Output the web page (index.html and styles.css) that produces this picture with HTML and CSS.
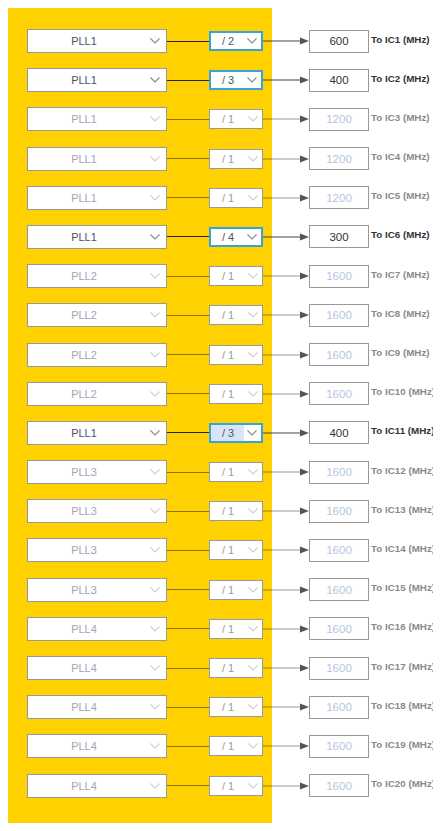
FILE: index.html
```html
<!DOCTYPE html>
<html lang="en">
<head>
    <meta charset="UTF-8">
    <meta name="viewport" content="width=device-width, initial-scale=1.0">
    <title>IC Clock Dividers</title>
    <link rel="stylesheet" href="styles.css">
</head>
<body>
    <div class="panel">
        <div class="row on">
            <div class="src"><span class="txt">PLL1</span><svg class="chev" viewBox="0 0 10 6"><polyline points="0.5,0.5 5,5 9.5,0.5"/></svg></div>
            <span class="link"></span>
            <div class="div sel"><span class="txt">/ 2</span><svg class="chev" viewBox="0 0 10 6"><polyline points="0.5,0.5 5,5 9.5,0.5"/></svg></div>
            <svg class="arrow" viewBox="0 0 46 10"><line x1="0" y1="5" x2="38" y2="5"/><polygon points="37,1.5 46,5 37,8.5"/></svg>
            <div class="out">600</div>
            <span class="label">To IC1 (MHz)</span>
        </div>
        <div class="row on">
            <div class="src"><span class="txt">PLL1</span><svg class="chev" viewBox="0 0 10 6"><polyline points="0.5,0.5 5,5 9.5,0.5"/></svg></div>
            <span class="link"></span>
            <div class="div sel"><span class="txt">/ 3</span><svg class="chev" viewBox="0 0 10 6"><polyline points="0.5,0.5 5,5 9.5,0.5"/></svg></div>
            <svg class="arrow" viewBox="0 0 46 10"><line x1="0" y1="5" x2="38" y2="5"/><polygon points="37,1.5 46,5 37,8.5"/></svg>
            <div class="out">400</div>
            <span class="label">To IC2 (MHz)</span>
        </div>
        <div class="row">
            <div class="src"><span class="txt">PLL1</span><svg class="chev" viewBox="0 0 10 6"><polyline points="0.5,0.5 5,5 9.5,0.5"/></svg></div>
            <span class="link"></span>
            <div class="div"><span class="txt">/ 1</span><svg class="chev" viewBox="0 0 10 6"><polyline points="0.5,0.5 5,5 9.5,0.5"/></svg></div>
            <svg class="arrow" viewBox="0 0 46 10"><line x1="0" y1="5" x2="38" y2="5"/><polygon points="37,1.5 46,5 37,8.5"/></svg>
            <div class="out">1200</div>
            <span class="label">To IC3 (MHz)</span>
        </div>
        <div class="row">
            <div class="src"><span class="txt">PLL1</span><svg class="chev" viewBox="0 0 10 6"><polyline points="0.5,0.5 5,5 9.5,0.5"/></svg></div>
            <span class="link"></span>
            <div class="div"><span class="txt">/ 1</span><svg class="chev" viewBox="0 0 10 6"><polyline points="0.5,0.5 5,5 9.5,0.5"/></svg></div>
            <svg class="arrow" viewBox="0 0 46 10"><line x1="0" y1="5" x2="38" y2="5"/><polygon points="37,1.5 46,5 37,8.5"/></svg>
            <div class="out">1200</div>
            <span class="label">To IC4 (MHz)</span>
        </div>
        <div class="row">
            <div class="src"><span class="txt">PLL1</span><svg class="chev" viewBox="0 0 10 6"><polyline points="0.5,0.5 5,5 9.5,0.5"/></svg></div>
            <span class="link"></span>
            <div class="div"><span class="txt">/ 1</span><svg class="chev" viewBox="0 0 10 6"><polyline points="0.5,0.5 5,5 9.5,0.5"/></svg></div>
            <svg class="arrow" viewBox="0 0 46 10"><line x1="0" y1="5" x2="38" y2="5"/><polygon points="37,1.5 46,5 37,8.5"/></svg>
            <div class="out">1200</div>
            <span class="label">To IC5 (MHz)</span>
        </div>
        <div class="row on">
            <div class="src"><span class="txt">PLL1</span><svg class="chev" viewBox="0 0 10 6"><polyline points="0.5,0.5 5,5 9.5,0.5"/></svg></div>
            <span class="link"></span>
            <div class="div sel"><span class="txt">/ 4</span><svg class="chev" viewBox="0 0 10 6"><polyline points="0.5,0.5 5,5 9.5,0.5"/></svg></div>
            <svg class="arrow" viewBox="0 0 46 10"><line x1="0" y1="5" x2="38" y2="5"/><polygon points="37,1.5 46,5 37,8.5"/></svg>
            <div class="out">300</div>
            <span class="label">To IC6 (MHz)</span>
        </div>
        <div class="row">
            <div class="src"><span class="txt">PLL2</span><svg class="chev" viewBox="0 0 10 6"><polyline points="0.5,0.5 5,5 9.5,0.5"/></svg></div>
            <span class="link"></span>
            <div class="div"><span class="txt">/ 1</span><svg class="chev" viewBox="0 0 10 6"><polyline points="0.5,0.5 5,5 9.5,0.5"/></svg></div>
            <svg class="arrow" viewBox="0 0 46 10"><line x1="0" y1="5" x2="38" y2="5"/><polygon points="37,1.5 46,5 37,8.5"/></svg>
            <div class="out">1600</div>
            <span class="label">To IC7 (MHz)</span>
        </div>
        <div class="row">
            <div class="src"><span class="txt">PLL2</span><svg class="chev" viewBox="0 0 10 6"><polyline points="0.5,0.5 5,5 9.5,0.5"/></svg></div>
            <span class="link"></span>
            <div class="div"><span class="txt">/ 1</span><svg class="chev" viewBox="0 0 10 6"><polyline points="0.5,0.5 5,5 9.5,0.5"/></svg></div>
            <svg class="arrow" viewBox="0 0 46 10"><line x1="0" y1="5" x2="38" y2="5"/><polygon points="37,1.5 46,5 37,8.5"/></svg>
            <div class="out">1600</div>
            <span class="label">To IC8 (MHz)</span>
        </div>
        <div class="row">
            <div class="src"><span class="txt">PLL2</span><svg class="chev" viewBox="0 0 10 6"><polyline points="0.5,0.5 5,5 9.5,0.5"/></svg></div>
            <span class="link"></span>
            <div class="div"><span class="txt">/ 1</span><svg class="chev" viewBox="0 0 10 6"><polyline points="0.5,0.5 5,5 9.5,0.5"/></svg></div>
            <svg class="arrow" viewBox="0 0 46 10"><line x1="0" y1="5" x2="38" y2="5"/><polygon points="37,1.5 46,5 37,8.5"/></svg>
            <div class="out">1600</div>
            <span class="label">To IC9 (MHz)</span>
        </div>
        <div class="row">
            <div class="src"><span class="txt">PLL2</span><svg class="chev" viewBox="0 0 10 6"><polyline points="0.5,0.5 5,5 9.5,0.5"/></svg></div>
            <span class="link"></span>
            <div class="div"><span class="txt">/ 1</span><svg class="chev" viewBox="0 0 10 6"><polyline points="0.5,0.5 5,5 9.5,0.5"/></svg></div>
            <svg class="arrow" viewBox="0 0 46 10"><line x1="0" y1="5" x2="38" y2="5"/><polygon points="37,1.5 46,5 37,8.5"/></svg>
            <div class="out">1600</div>
            <span class="label">To IC10 (MHz)</span>
        </div>
        <div class="row on">
            <div class="src"><span class="txt">PLL1</span><svg class="chev" viewBox="0 0 10 6"><polyline points="0.5,0.5 5,5 9.5,0.5"/></svg></div>
            <span class="link"></span>
            <div class="div sel focus"><span class="txt">/ 3</span><svg class="chev" viewBox="0 0 10 6"><polyline points="0.5,0.5 5,5 9.5,0.5"/></svg></div>
            <svg class="arrow" viewBox="0 0 46 10"><line x1="0" y1="5" x2="38" y2="5"/><polygon points="37,1.5 46,5 37,8.5"/></svg>
            <div class="out">400</div>
            <span class="label">To IC11 (MHz)</span>
        </div>
        <div class="row">
            <div class="src"><span class="txt">PLL3</span><svg class="chev" viewBox="0 0 10 6"><polyline points="0.5,0.5 5,5 9.5,0.5"/></svg></div>
            <span class="link"></span>
            <div class="div"><span class="txt">/ 1</span><svg class="chev" viewBox="0 0 10 6"><polyline points="0.5,0.5 5,5 9.5,0.5"/></svg></div>
            <svg class="arrow" viewBox="0 0 46 10"><line x1="0" y1="5" x2="38" y2="5"/><polygon points="37,1.5 46,5 37,8.5"/></svg>
            <div class="out">1600</div>
            <span class="label">To IC12 (MHz)</span>
        </div>
        <div class="row">
            <div class="src"><span class="txt">PLL3</span><svg class="chev" viewBox="0 0 10 6"><polyline points="0.5,0.5 5,5 9.5,0.5"/></svg></div>
            <span class="link"></span>
            <div class="div"><span class="txt">/ 1</span><svg class="chev" viewBox="0 0 10 6"><polyline points="0.5,0.5 5,5 9.5,0.5"/></svg></div>
            <svg class="arrow" viewBox="0 0 46 10"><line x1="0" y1="5" x2="38" y2="5"/><polygon points="37,1.5 46,5 37,8.5"/></svg>
            <div class="out">1600</div>
            <span class="label">To IC13 (MHz)</span>
        </div>
        <div class="row">
            <div class="src"><span class="txt">PLL3</span><svg class="chev" viewBox="0 0 10 6"><polyline points="0.5,0.5 5,5 9.5,0.5"/></svg></div>
            <span class="link"></span>
            <div class="div"><span class="txt">/ 1</span><svg class="chev" viewBox="0 0 10 6"><polyline points="0.5,0.5 5,5 9.5,0.5"/></svg></div>
            <svg class="arrow" viewBox="0 0 46 10"><line x1="0" y1="5" x2="38" y2="5"/><polygon points="37,1.5 46,5 37,8.5"/></svg>
            <div class="out">1600</div>
            <span class="label">To IC14 (MHz)</span>
        </div>
        <div class="row">
            <div class="src"><span class="txt">PLL3</span><svg class="chev" viewBox="0 0 10 6"><polyline points="0.5,0.5 5,5 9.5,0.5"/></svg></div>
            <span class="link"></span>
            <div class="div"><span class="txt">/ 1</span><svg class="chev" viewBox="0 0 10 6"><polyline points="0.5,0.5 5,5 9.5,0.5"/></svg></div>
            <svg class="arrow" viewBox="0 0 46 10"><line x1="0" y1="5" x2="38" y2="5"/><polygon points="37,1.5 46,5 37,8.5"/></svg>
            <div class="out">1600</div>
            <span class="label">To IC15 (MHz)</span>
        </div>
        <div class="row">
            <div class="src"><span class="txt">PLL4</span><svg class="chev" viewBox="0 0 10 6"><polyline points="0.5,0.5 5,5 9.5,0.5"/></svg></div>
            <span class="link"></span>
            <div class="div"><span class="txt">/ 1</span><svg class="chev" viewBox="0 0 10 6"><polyline points="0.5,0.5 5,5 9.5,0.5"/></svg></div>
            <svg class="arrow" viewBox="0 0 46 10"><line x1="0" y1="5" x2="38" y2="5"/><polygon points="37,1.5 46,5 37,8.5"/></svg>
            <div class="out">1600</div>
            <span class="label">To IC16 (MHz)</span>
        </div>
        <div class="row">
            <div class="src"><span class="txt">PLL4</span><svg class="chev" viewBox="0 0 10 6"><polyline points="0.5,0.5 5,5 9.5,0.5"/></svg></div>
            <span class="link"></span>
            <div class="div"><span class="txt">/ 1</span><svg class="chev" viewBox="0 0 10 6"><polyline points="0.5,0.5 5,5 9.5,0.5"/></svg></div>
            <svg class="arrow" viewBox="0 0 46 10"><line x1="0" y1="5" x2="38" y2="5"/><polygon points="37,1.5 46,5 37,8.5"/></svg>
            <div class="out">1600</div>
            <span class="label">To IC17 (MHz)</span>
        </div>
        <div class="row">
            <div class="src"><span class="txt">PLL4</span><svg class="chev" viewBox="0 0 10 6"><polyline points="0.5,0.5 5,5 9.5,0.5"/></svg></div>
            <span class="link"></span>
            <div class="div"><span class="txt">/ 1</span><svg class="chev" viewBox="0 0 10 6"><polyline points="0.5,0.5 5,5 9.5,0.5"/></svg></div>
            <svg class="arrow" viewBox="0 0 46 10"><line x1="0" y1="5" x2="38" y2="5"/><polygon points="37,1.5 46,5 37,8.5"/></svg>
            <div class="out">1600</div>
            <span class="label">To IC18 (MHz)</span>
        </div>
        <div class="row">
            <div class="src"><span class="txt">PLL4</span><svg class="chev" viewBox="0 0 10 6"><polyline points="0.5,0.5 5,5 9.5,0.5"/></svg></div>
            <span class="link"></span>
            <div class="div"><span class="txt">/ 1</span><svg class="chev" viewBox="0 0 10 6"><polyline points="0.5,0.5 5,5 9.5,0.5"/></svg></div>
            <svg class="arrow" viewBox="0 0 46 10"><line x1="0" y1="5" x2="38" y2="5"/><polygon points="37,1.5 46,5 37,8.5"/></svg>
            <div class="out">1600</div>
            <span class="label">To IC19 (MHz)</span>
        </div>
        <div class="row">
            <div class="src"><span class="txt">PLL4</span><svg class="chev" viewBox="0 0 10 6"><polyline points="0.5,0.5 5,5 9.5,0.5"/></svg></div>
            <span class="link"></span>
            <div class="div"><span class="txt">/ 1</span><svg class="chev" viewBox="0 0 10 6"><polyline points="0.5,0.5 5,5 9.5,0.5"/></svg></div>
            <svg class="arrow" viewBox="0 0 46 10"><line x1="0" y1="5" x2="38" y2="5"/><polygon points="37,1.5 46,5 37,8.5"/></svg>
            <div class="out">1600</div>
            <span class="label">To IC20 (MHz)</span>
        </div>
    </div>
</body>
</html>
```

FILE: styles.css
```css
body {
    margin: 8px;
    font-family: "Liberation Sans", Arial, sans-serif;
    background: #fff;
    color: #333;
}
.panel {
    width: 264px;
    box-sizing: border-box;
    background: #ffd100;
    padding: 21px 0 25px 19px;
    display: flex;
    flex-direction: column;
    gap: 15.2px;
}
.row {
    display: flex;
    align-items: center;
    height: 24px;
    width: 405px;
}
.src {
    flex: none;
    box-sizing: border-box;
    width: 140px;
    height: 24px;
    background: #fff;
    border: 1px solid #999;
    display: flex;
    align-items: center;
    font-size: 11px;
    color: #a3a3b6;
}
.src .txt {
    flex: 1;
    text-align: center;
    padding-right: 10px;
}
.src .chev {
    margin-right: 6px;
}
.chev {
    width: 10px;
    height: 6px;
    fill: none;
    stroke: #d0d0d0;
    stroke-width: 1.1;
}
.link {
    flex: none;
    width: 42px;
    height: 0;
    border-top: 1px solid rgba(0, 0, 0, 0.45);
}
.div {
    flex: none;
    box-sizing: border-box;
    width: 54px;
    height: 20px;
    background: #fff;
    border: 1px solid #999;
    display: flex;
    align-items: center;
    font-size: 11px;
    color: #9a9a9a;
}
.div .txt {
    flex: 1;
    align-self: stretch;
    display: flex;
    align-items: center;
    padding-left: 12px;
}
.div .chev {
    margin-right: 4px;
    margin-left: 3px;
}
.arrow {
    flex: none;
    width: 46px;
    height: 10px;
}
.arrow line {
    stroke: rgba(0, 0, 0, 0.4);
    stroke-width: 1;
}
.arrow polygon {
    fill: #555;
}
.out {
    flex: none;
    box-sizing: border-box;
    width: 60px;
    height: 23px;
    border: 1px solid #999;
    background: #fff;
    display: flex;
    align-items: center;
    justify-content: center;
    font-size: 11.5px;
    color: #b3c6dc;
}
.label {
    flex: none;
    margin-left: 2px;
    margin-top: -4px;
    font-size: 9.8px;
    font-weight: bold;
    color: #8a8a8a;
    white-space: nowrap;
}

/* active rows */
.row.on .src {
    color: #4e4e6a;
}
.row.on .src .chev,
.row.on .div .chev {
    stroke: #888;
}
.row.on .link {
    border-top-color: #222;
}
.row.on .arrow line {
    stroke: #444;
}
.row.on .out {
    color: #333;
}
.row.on .label {
    color: #333;
}
.div.sel {
    border: 2px solid #35a3dc;
    color: #555;
}
.div.sel .txt {
    padding-left: 11px;
}
.div.focus .txt {
    background: #d6e6f6;
}
```
